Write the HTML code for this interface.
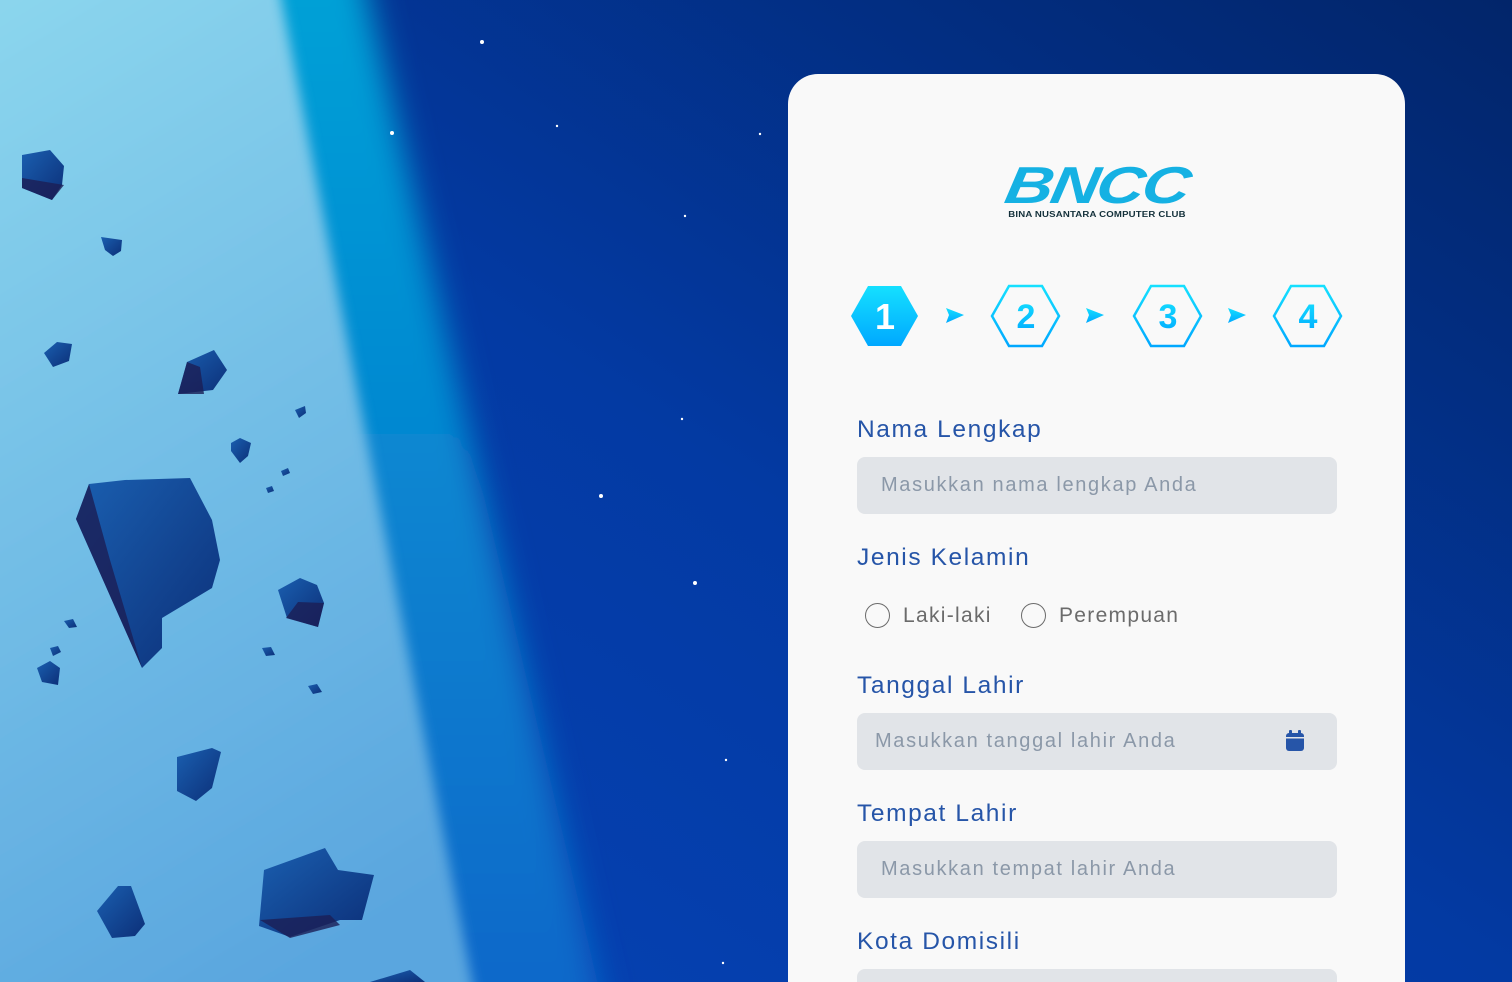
<!DOCTYPE html>
<html><head><meta charset="utf-8"><style>
*{margin:0;padding:0;box-sizing:border-box}
html,body{width:1512px;height:982px;overflow:hidden}
body{position:relative;font-family:"Liberation Sans",sans-serif;background:#0339a5}
svg.bg{position:absolute;left:0;top:0}
.card{position:absolute;left:788px;top:74px;width:617px;height:908px;overflow:hidden;background:#f9f9f9;border-radius:30px 30px 0 0}
.lbl{position:absolute;left:69px;font-size:24.5px;color:#2655a8;letter-spacing:1.6px}
.inp{position:absolute;left:69px;width:480px;height:57px;background:#e1e4e8;border-radius:8px;font-size:20px;color:#8b98a8;padding-left:24px;line-height:57px;letter-spacing:1.65px}
.radio{position:absolute;top:529px;width:25px;height:25px;border:1.5px solid #6b6b6b;border-radius:50%}
.rt{position:absolute;top:530px;font-size:21px;color:#6b6b6b;letter-spacing:1.3px}
</style></head><body>
<svg class="bg" width="1512" height="982" viewBox="0 0 1512 982">
<defs>
<linearGradient id="dk" x1="0" y1="1" x2="1" y2="0"><stop offset="0" stop-color="#0744b8"/><stop offset="0.5" stop-color="#033aa3"/><stop offset="1" stop-color="#02256a"/></linearGradient>
<linearGradient id="lt" x1="0" y1="0" x2="0.3" y2="1"><stop offset="0" stop-color="#92dcef"/><stop offset="1" stop-color="#5aa6df"/></linearGradient>
<linearGradient id="bd" x1="0" y1="0" x2="0" y2="1"><stop offset="0" stop-color="#04a6d8"/><stop offset="1" stop-color="#0a62c8"/></linearGradient>
<filter id="bl" x="-0.5" y="-0.2" width="2" height="1.4"><feGaussianBlur stdDeviation="16"/></filter>
<filter id="bl2" x="-0.5" y="-0.2" width="2" height="1.4"><feGaussianBlur stdDeviation="6"/></filter>
<linearGradient id="rk" x1="0" y1="0" x2="1" y2="1"><stop offset="0" stop-color="#1a5fb0"/><stop offset="1" stop-color="#0c2f78"/></linearGradient>
</defs>
<rect width="1512" height="982" fill="url(#dk)"/>
<polygon points="-100,-100 345,-100 625,1100 -100,1100" fill="url(#bd)" filter="url(#bl)"/>
<polygon points="-100,-100 262,-100 495,1100 -100,1100" fill="url(#lt)" filter="url(#bl2)"/>
<g fill="#fff"><circle cx="482" cy="42" r="2"/><circle cx="392" cy="133" r="2"/><circle cx="557" cy="126" r="1.2"/><circle cx="760" cy="134" r="1.2"/><circle cx="685" cy="216" r="1.2"/><circle cx="682" cy="419" r="1.2"/><circle cx="601" cy="496" r="2"/><circle cx="695" cy="583" r="2"/><circle cx="726" cy="760" r="1.2"/><circle cx="723" cy="963" r="1.2"/></g>
<g fill="url(#rk)">
<polygon points="22,155 50,150 64,166 62,185 52,200 22,188"/>
<polygon points="101,237 122,240 121,251 113,256 105,250"/>
<polygon points="44,353 57,342 72,344 69,361 53,367"/>
<polygon points="187,362 214,350 227,370 213,390 178,394"/>
<polygon points="295,410 305,406 306,413 299,418"/>
<polygon points="231,443 240,438 251,443 248,456 240,463 231,451"/>
<polygon points="76,519 89,484 125,480 190,478 212,520 220,560 212,588 162,618 162,648 142,668"/>
<polygon points="278,590 300,578 317,585 324,603 318,627 287,618"/>
<polygon points="177,757 212,748 221,752 212,788 196,801 177,791"/>
<polygon points="97,911 118,886 131,886 145,924 135,936 112,938"/>
<polygon points="264,870 325,848 338,870 374,875 362,920 340,920 290,937 259,926"/>
<polygon points="37,668 50,661 60,668 58,685 42,682"/>
<polygon points="64,621 73,619 77,627 69,628"/>
<polygon points="50,648 58,646 61,652 53,656"/>
<polygon points="262,648 271,647 275,655 266,656"/>
<polygon points="308,686 317,684 322,692 313,694"/>
<polygon points="281,471 288,468 290,473 283,476"/>
<polygon points="266,488 272,486 274,491 268,493"/>
<polygon points="370,982 410,970 425,982"/>
</g>
<g fill="#1b1e55" opacity="0.8"><polygon points="22,178 64,185 52,200 22,188"/><polygon points="178,394 187,362 200,367 204,394"/><polygon points="76,519 89,484 110,560 142,668"/><polygon points="286,618 298,602 324,603 318,627"/><polygon points="260,920 290,938 340,925 330,915"/></g>
</svg>
<div class="card">
<div style="position:absolute;left:220px;top:88px;width:178px;text-align:center">
<div style="font-size:52px;font-weight:bold;font-style:italic;color:#15b1e3;letter-spacing:-2px;line-height:48px;transform:scaleX(1.28) skewX(-8deg)">BNCC</div>
<div style="font-size:8px;font-weight:bold;color:#13303a;letter-spacing:0.15px;margin-top:0px;white-space:nowrap;transform:scaleX(1.2)">BINA NUSANTARA COMPUTER CLUB</div>
</div>
<svg style="position:absolute;left:60px;top:209px" width="500" height="66" viewBox="0 0 500 66">
<defs><linearGradient id="hx" x1="0" y1="0" x2="0" y2="1"><stop offset="0" stop-color="#15e0ff"/><stop offset="1" stop-color="#00a8ff"/></linearGradient></defs>
<polygon points="3,33 20,3 53,3 70,33 53,63 20,63" fill="url(#hx)"/>
<text x="37" y="46" text-anchor="middle" font-size="36" font-weight="bold" fill="#fff" font-family="Liberation Sans">1</text>
<g fill="none" stroke="url(#hx)" stroke-width="2.5">
<polygon points="144,33 161,3 194,3 211,33 194,63 161,63"/>
<polygon points="286,33 303,3 336,3 353,33 336,63 303,63"/>
<polygon points="426,33 443,3 476,3 493,33 476,63 443,63"/>
</g>
<g font-size="34" font-weight="bold" fill="url(#hx)" text-anchor="middle" font-family="Liberation Sans">
<text x="178" y="45">2</text><text x="320" y="45">3</text><text x="460" y="45">4</text></g>
<g fill="url(#hx)">
<path d="M98,25 L116,32 L98,40 L101,32Z"/><path d="M238,25 L256,32 L238,40 L241,32Z"/><path d="M380,25 L398,32 L380,40 L383,32Z"/></g>
</svg>
<div class="lbl" style="top:342px">Nama Lengkap</div>
<div class="inp" style="top:383px">Masukkan nama lengkap Anda</div>
<div class="lbl" style="top:470px">Jenis Kelamin</div>
<div class="radio" style="left:77px"></div><div class="rt" style="left:115px">Laki-laki</div>
<div class="radio" style="left:233px"></div><div class="rt" style="left:271px">Perempuan</div>
<div class="lbl" style="top:598px">Tanggal Lahir</div>
<div class="inp" style="top:639px;padding-left:18px">Masukkan tanggal lahir Anda
<svg style="position:absolute;left:428px;top:16px" width="20" height="24" viewBox="0 0 20 24"><rect x="4" y="1" width="3" height="5" rx="1" fill="#2655a8"/><rect x="13" y="1" width="3" height="5" rx="1" fill="#2655a8"/><rect x="1" y="4" width="18" height="18" rx="3" fill="#2655a8"/><rect x="1" y="8" width="18" height="1.5" fill="#e1e4e8"/></svg></div>
<div class="lbl" style="top:726px">Tempat Lahir</div>
<div class="inp" style="top:767px">Masukkan tempat lahir Anda</div>
<div class="lbl" style="top:854px">Kota Domisili</div>
<div class="inp" style="top:895px"></div>
</div>
</body></html>
